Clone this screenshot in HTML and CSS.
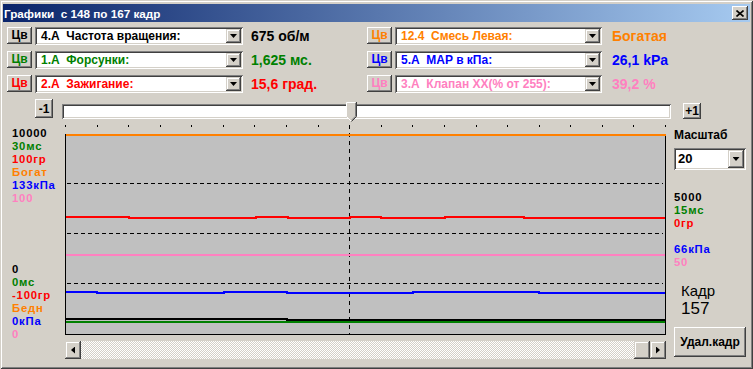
FILE: index.html
```html
<!DOCTYPE html>
<html lang="ru">
<head>
    <meta charset="UTF-8">
    <meta name="viewport" content="width=device-width, initial-scale=1.0">
    <title>Графики</title>
    <link rel="stylesheet" href="styles.css">
</head>
<body>

<div class="window">
    <div class="titlebar">
        <span class="title">Графики&nbsp; с 148 по 167 кадр</span>
        <span class="close-btn">
            <svg width="8" height="7" viewBox="0 0 8 7"><path d="M0.5 0.5L7.5 6.5M7.5 0.5L0.5 6.5" stroke="#000" stroke-width="1.6"/></svg>
        </span>
    </div>

    <div class="panel">
        <!-- channel selectors -->
        <div class="controls">
            <div class="row">
                <button class="btn btn-cv c-black">Цв</button>
                <div class="combo"><span class="combo-text c-black">4.А  Частота вращения:</span><span class="drop"></span></div>
                <span class="value c-black">675 об/м</span>
                <button class="btn btn-cv c-orange">Цв</button>
                <div class="combo combo-right"><span class="combo-text c-orange">12.4  Смесь Левая:</span><span class="drop"></span></div>
                <span class="value value-right c-orange">Богатая</span>
            </div>
            <div class="row">
                <button class="btn btn-cv c-green">Цв</button>
                <div class="combo"><span class="combo-text c-green">1.А  Форсунки:</span><span class="drop"></span></div>
                <span class="value c-green">1,625 мс.</span>
                <button class="btn btn-cv c-blue">Цв</button>
                <div class="combo combo-right"><span class="combo-text c-blue">5.А  MAP в кПа:</span><span class="drop"></span></div>
                <span class="value value-right c-blue">26,1 kPa</span>
            </div>
            <div class="row">
                <button class="btn btn-cv c-red">Цв</button>
                <div class="combo"><span class="combo-text c-red">2.А  Зажигание:</span><span class="drop"></span></div>
                <span class="value c-red">15,6 град.</span>
                <button class="btn btn-cv c-pink">Цв</button>
                <div class="combo combo-right"><span class="combo-text c-pink">3.А  Клапан XX(% от 255):</span><span class="drop"></span></div>
                <span class="value value-right c-pink">39,2 %</span>
            </div>
        </div>

        <!-- frame slider -->
        <div class="slider-row">
            <button class="btn step-btn step-minus">-1</button>
            <div class="track">
                <svg class="thumb" width="11" height="20" viewBox="0 0 11 20">
                    <path d="M0.5 0.5H10.5V14.5L5.5 19.5L0.5 14.5Z" fill="#D4D0C8" stroke="none"/>
                    <path d="M0.5 14.5V0.5H9.5" fill="none" stroke="#fff"/>
                    <path d="M10.5 0V14.5L5.5 19.5" fill="none" stroke="#404040"/>
                    <path d="M9.5 1V14.2L5.5 18.2" fill="none" stroke="#808080"/>
                    <path d="M0.5 14.5L5 19" fill="none" stroke="#fff"/>
                </svg>
            </div>
            <button class="btn step-btn step-plus">+1</button>
        </div>

        <div class="main">
            <div class="axis">
                <div class="axis-group">
                    <div class="c-black">10000</div>
                    <div class="c-green">30мс</div>
                    <div class="c-red">100гр</div>
                    <div class="c-orange">Богат</div>
                    <div class="c-blue">133кПа</div>
                    <div class="c-pink">100</div>
                </div>
                <div class="axis-group axis-bottom">
                    <div class="c-black">0</div>
                    <div class="c-green">0мс</div>
                    <div class="c-red">-100гр</div>
                    <div class="c-orange">Бедн</div>
                    <div class="c-blue">0кПа</div>
                    <div class="c-pink">0</div>
                </div>
            </div>

            <div class="plot">
                <svg class="chart" width="601" height="211" viewBox="0 0 601 211" shape-rendering="crispEdges">
                    <rect x="0" y="10" width="601" height="201" fill="#C0C0C0"/>
                    <g fill="#000">
                        <rect x="0" y="1" width="1" height="2"/>
                        <rect x="32" y="1" width="1" height="2"/>
                        <rect x="63" y="1" width="1" height="2"/>
                        <rect x="95" y="1" width="1" height="2"/>
                        <rect x="126" y="1" width="1" height="2"/>
                        <rect x="158" y="1" width="1" height="2"/>
                        <rect x="189" y="1" width="1" height="2"/>
                        <rect x="221" y="1" width="1" height="2"/>
                        <rect x="253" y="1" width="1" height="2"/>
                        <rect x="284" y="1" width="1" height="2"/>
                        <rect x="316" y="1" width="1" height="2"/>
                        <rect x="347" y="1" width="1" height="2"/>
                        <rect x="379" y="1" width="1" height="2"/>
                        <rect x="411" y="1" width="1" height="2"/>
                        <rect x="442" y="1" width="1" height="2"/>
                        <rect x="474" y="1" width="1" height="2"/>
                        <rect x="505" y="1" width="1" height="2"/>
                        <rect x="537" y="1" width="1" height="2"/>
                        <rect x="568" y="1" width="1" height="2"/>
                        <rect x="600" y="1" width="1" height="2"/>
                    </g>
                    <g stroke="#000" stroke-width="1" fill="none">
                        <path d="M0.5 10V211M600.5 10V211M0 210.5H601"/>
                        <path d="M2 59.5H598M2 109.5H598M2 159.5H598" stroke-dasharray="4 3"/>
                        <path d="M284.5 1V210" stroke-dasharray="4 4"/>
                    </g>
                    <g fill="none" stroke-width="2">
                        <path d="M1 11H601" stroke="#FF8000"/>
                        <path d="M1 93H64V94H191V93H223V94H285V93H316V94H380V93H459V94H600" stroke="#FF0000"/>
                        <path d="M1 131H600" stroke="#FF80C0"/>
                        <path d="M1 168H32V169H159V168H222V169H348V168H474V169H600" stroke="#0000FF"/>
                        <path d="M1 195H222V196H600" stroke="#000"/>
                        <path d="M1 198H600" stroke="#008000"/>
                    </g>
                </svg>

                <div class="scrollbar">
                    <span class="sb-btn sb-left"></span>
                    <span class="sb-track"></span>
                    <span class="sb-thumb"></span>
                    <span class="sb-btn sb-right"></span>
                </div>
            </div>

            <div class="side">
                <div class="side-title">Масштаб</div>
                <div class="combo scale-combo"><span class="combo-text">20</span><span class="drop"></span></div>
                <div class="axis-group side-labels">
                    <div class="c-black">5000</div>
                    <div class="c-green">15мс</div>
                    <div class="c-red">0гр</div>
                    <div class="c-orange">&nbsp;</div>
                    <div class="c-blue">66кПа</div>
                    <div class="c-pink">50</div>
                </div>
                <div class="frame-label">Кадр</div>
                <div class="frame-num">157</div>
                <button class="btn del-btn">Удал.кадр</button>
            </div>
        </div>
    </div>
</div>

</body>
</html>
```

FILE: styles.css
```css
body {
    margin: 0;
    padding: 0;
    background-color: #D4D0C8;
    font-family: "Liberation Sans", Arial, sans-serif;
}

.window {
    width: 753px;
    height: 369px;
    box-sizing: border-box;
    padding: 4px 3px 3px 3px;
    background: #D4D0C8;
    box-shadow: inset 1px 1px #D4D0C8, inset -1px -1px #404040, inset 2px 2px #ffffff, inset -2px -2px #808080;
}

.titlebar {
    height: 18px;
    display: flex;
    align-items: center;
    justify-content: space-between;
    padding: 0 2px 0 1px;
    background: linear-gradient(to right, #0A246A, #A6CAF0);
}

.title {
    color: #ffffff;
    font-size: 11.7px;
    font-weight: bold;
    white-space: nowrap;
}

.close-btn {
    width: 16px;
    height: 14px;
    box-sizing: border-box;
    display: flex;
    align-items: center;
    justify-content: center;
    background: #D4D0C8;
    box-shadow: inset -1px -1px #404040, inset 1px 1px #ffffff, inset -2px -2px #808080, inset 2px 2px #D4D0C8;
}

.panel {
    padding: 5px 4px 0 4px;
}

/* colours of the channels */
.c-black { color: #000000; }
.c-green { color: #008000; }
.c-red { color: #FF0000; }
.c-orange { color: #FF8000; }
.c-blue { color: #0000FF; }
.c-pink { color: #FF80C0; }

.row {
    display: flex;
    align-items: flex-start;
    height: 18px;
    margin-bottom: 6px;
}

.btn {
    box-sizing: border-box;
    padding: 0;
    border: none;
    background: #D4D0C8;
    font-family: "Liberation Sans", Arial, sans-serif;
    font-weight: bold;
    font-size: 12px;
    box-shadow: inset -1px -1px #404040, inset 1px 1px #ffffff, inset -2px -2px #808080, inset 2px 2px #D4D0C8;
}

.btn-cv {
    width: 25px;
    height: 17px;
    line-height: 15px;
}

.combo {
    margin-left: 3px;
    width: 208px;
    height: 18px;
    box-sizing: border-box;
    padding: 2px;
    display: flex;
    background: #ffffff;
    box-shadow: inset 1px 1px #808080, inset -1px -1px #ffffff, inset 2px 2px #404040, inset -2px -2px #D4D0C8;
}

.combo-right {
    width: 207px;
}

.combo-text {
    flex: 1;
    padding-left: 4px;
    font-size: 12px;
    font-weight: bold;
    line-height: 14px;
    white-space: pre;
    overflow: hidden;
}

.drop {
    width: 15px;
    height: 100%;
    box-sizing: border-box;
    display: flex;
    align-items: center;
    justify-content: center;
    background: #D4D0C8;
    box-shadow: inset -1px -1px #404040, inset 1px 1px #D4D0C8, inset -2px -2px #808080, inset 2px 2px #ffffff;
}

.drop::after {
    content: "";
    width: 7px;
    height: 4px;
    background: #000000;
    clip-path: polygon(0 0, 100% 0, 50% 100%);
}

.value {
    margin-left: 8px;
    width: 116px;
    font-size: 14px;
    font-weight: bold;
    line-height: 18px;
    white-space: nowrap;
}

.value-right {
    margin-left: 10px;
    width: auto;
}

/* slider */
.slider-row {
    display: flex;
    align-items: flex-start;
    height: 25px;
}

.step-btn {
    width: 18px;
    font-size: 12px;
}

.step-minus {
    margin-left: 28px;
    height: 19px;
}

.step-plus {
    margin-left: 12px;
    margin-top: 4px;
    height: 16px;
}

.track {
    position: relative;
    margin-left: 9px;
    margin-top: 5px;
    width: 609px;
    height: 15px;
    box-sizing: border-box;
    background: #ffffff;
    box-shadow: inset 1px 1px #808080, inset -1px -1px #ffffff, inset 2px 2px #404040, inset -2px -2px #D4D0C8;
}

.thumb {
    position: absolute;
    left: 284px;
    top: -2px;
}

/* chart area */
.main {
    display: flex;
}

.axis {
    width: 60px;
    height: 217px;
    box-sizing: border-box;
    padding: 3px 0 0 5px;
    display: flex;
    flex-direction: column;
}

.axis-group {
    font-size: 11.3px;
    font-weight: bold;
    letter-spacing: 0.8px;
    line-height: 13px;
    white-space: nowrap;
}

.axis-bottom {
    margin-top: auto;
}

.plot {
    width: 601px;
}

.chart {
    display: block;
}

.scrollbar {
    margin-top: 6px;
    height: 18px;
    display: flex;
}

.sb-track {
    flex: 1;
    background: repeating-conic-gradient(#D4D0C8 0 25%, #ffffff 0 50%) 0 0 / 2px 2px;
}

.sb-btn,
.sb-thumb {
    width: 16px;
    height: 18px;
    box-sizing: border-box;
    display: flex;
    align-items: center;
    justify-content: center;
    background: #D4D0C8;
    box-shadow: inset -1px -1px #404040, inset 1px 1px #D4D0C8, inset -2px -2px #808080, inset 2px 2px #ffffff;
}

.sb-btn::after {
    content: "";
    width: 4px;
    height: 7px;
    background: #000000;
}

.sb-left::after {
    clip-path: polygon(100% 0, 100% 100%, 0 50%);
}

.sb-right::after {
    clip-path: polygon(0 0, 0 100%, 100% 50%);
}

.side {
    margin-left: 8px;
    width: 72px;
}

.side-title {
    margin-top: 4px;
    font-size: 12px;
    font-weight: bold;
    line-height: 14px;
}

.scale-combo {
    margin-left: 0;
    margin-top: 6px;
    width: 72px;
    height: 22px;
}

.scale-combo .combo-text {
    padding-left: 2px;
    font-size: 13px;
    line-height: 18px;
}

.scale-combo .drop {
    width: 16px;
}

.side-labels {
    margin-top: 21px;
}

.frame-label {
    margin-top: 13px;
    padding-left: 7px;
    font-size: 15px;
    line-height: 17px;
}

.frame-num {
    padding-left: 7px;
    font-size: 17px;
    line-height: 20px;
}

.del-btn {
    margin-top: 8px;
    width: 72px;
    height: 30px;
}
```
